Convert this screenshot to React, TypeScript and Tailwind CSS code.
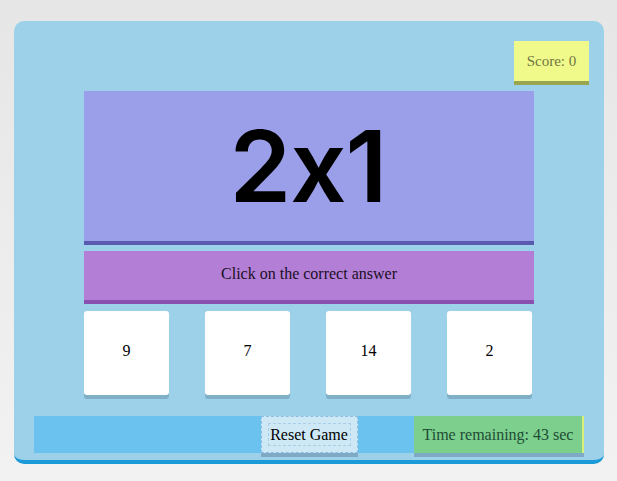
export default function App() {
  const answers = [9, 7, 14, 2];

  return (
    <div className="min-h-screen w-full bg-gradient-to-b from-[#e6e6e6] to-[#f2f2f2] pt-[21px] pl-[14px] font-['Liberation_Serif',serif]">
      <div className="w-[590px] h-[443px] rounded-[10px] bg-[#9dd1ea] border-b-4 border-[#1a9ad6] pt-[20px]">
        {/* score */}
        <div className="flex justify-end pr-[15px]">
          <div className="w-[75px] h-[40px] bg-[#f0fa8a] shadow-[0_4px_0_#9aa550] flex items-center justify-center text-[15px] text-[#6f7542]">
            Score: 0
          </div>
        </div>

        {/* question */}
        <div className="mt-[10px] ml-[70px] w-[450px] h-[154px] bg-[#9b9fe9] border-b-4 border-[#5a5ab0] flex items-center justify-center">
          <span className="text-[99px] leading-none font-semibold text-black font-['Comic_Sans_MS','Inter',sans-serif] tracking-[-1px] pr-[2px]">
            2x1
          </span>
        </div>

        {/* instruction */}
        <div className="mt-[6px] ml-[70px] w-[450px] h-[53px] bg-[#b37fd6] border-b-4 border-[#8a50b0] flex items-center justify-center pb-[3px] text-[16px] text-[#1a0f24]">
          Click on the correct answer
        </div>

        {/* answers */}
        <div className="mt-[7px] ml-[70px] w-[450px] flex justify-between pr-[2px]">
          {answers.map((a) => (
            <div
              key={a}
              className="w-[85px] h-[84px] bg-white rounded-[3px] shadow-[0_4px_0_#7fb0c8] flex items-center justify-center pb-[4px] text-[16px] text-black"
            >
              {a}
            </div>
          ))}
        </div>

        {/* bottom bar */}
        <div className="mt-[21px] ml-[20px] w-[550px] h-[37px] bg-[#6cc2ef] flex">
          <div className="flex-1" />
          <button className="w-[97px] h-[37px] bg-[#cfe8f6] border border-dashed border-[#8fbfe0] outline outline-1 outline-dashed outline-[#a9cfe8] -outline-offset-[8px] shadow-[0_4px_0_#7fa9c4] text-[16px] text-black font-['Liberation_Serif',serif]">
            Reset Game
          </button>
          <div className="flex-1 flex justify-end">
            <div className="w-[170px] h-[37px] bg-[#7ccf8c] border-r-2 border-[#d8f07a] shadow-[0_4px_0_#7fa9c4] flex items-center justify-center text-[16px] text-[#1e4d36]">
              Time remaining: 43 sec
            </div>
          </div>
        </div>
      </div>
    </div>
  );
}
